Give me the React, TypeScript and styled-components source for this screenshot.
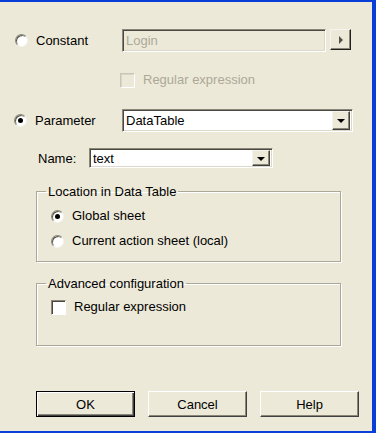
import styled, { createGlobalStyle } from "styled-components";

const Global = createGlobalStyle`
  html, body {
    margin: 0;
    padding: 0;
    background: #ece9d8;
  }
  body {
    font-family: "Liberation Sans", Arial, sans-serif;
    font-size: 13px;
    color: #000;
  }
`;

const Frame = styled.div`
  box-sizing: border-box;
  width: 376px;
  height: 433px;
  background: #ece9d8;
  border-top: 2px solid #0a3ed8;
  border-right: 4px solid #0a3ed8;
  border-bottom: 2px solid #0a3ed8;
  display: flex;
  flex-direction: column;
`;

const Row = styled.div<{ $top: number; $left?: number }>`
  display: flex;
  align-items: center;
  margin-top: ${(p) => p.$top}px;
  padding-left: ${(p) => p.$left ?? 0}px;
`;

const Option = styled.label<{ $width?: number }>`
  display: flex;
  align-items: center;
  gap: 8px;
  width: ${(p) => (p.$width ? `${p.$width}px` : "auto")};
  line-height: 16px;
  white-space: nowrap;
`;

const Radio = styled.span<{ $checked?: boolean }>`
  position: relative;
  box-sizing: border-box;
  width: 13px;
  height: 13px;
  border-radius: 50%;
  background: #fff;
  border: 1px solid;
  border-color: #8a8778 #f4f3ee #f4f3ee #8a8778;
  box-shadow: inset 1px 1px 0 #5a584e;
  flex: none;
  &::after {
    content: "";
    display: ${(p) => (p.$checked ? "block" : "none")};
    position: absolute;
    left: 3px;
    top: 3px;
    width: 5px;
    height: 5px;
    border-radius: 50%;
    background: #000;
  }
`;

const Check = styled.span<{ $disabled?: boolean }>`
  box-sizing: border-box;
  width: 15px;
  height: 15px;
  flex: none;
  background: ${(p) => (p.$disabled ? "#ece9d8" : "#fff")};
  border: 1px solid;
  border-color: ${(p) =>
    p.$disabled ? "#c9c6b8 #fff #fff #c9c6b8" : "#8a8778 #fff #fff #8a8778"};
  box-shadow: inset 1px 1px 0 ${(p) => (p.$disabled ? "#d8d5c6" : "#4a4840")};
`;

const Caption = styled.span<{ $disabled?: boolean }>`
  color: ${(p) => (p.$disabled ? "#aca899" : "#000")};
`;

const Field = styled.div<{ $width: number; $height: number; $disabled?: boolean }>`
  box-sizing: border-box;
  display: flex;
  align-items: center;
  width: ${(p) => p.$width}px;
  height: ${(p) => p.$height}px;
  background: ${(p) => (p.$disabled ? "#ece9d8" : "#fff")};
  border: 1px solid;
  border-color: #8a8778 #fff #fff #8a8778;
  box-shadow: inset 1px 1px 0 #4a4840, inset -1px -1px 0 #dcd9cb;
  padding: 2px 2px 2px 3px;
  color: ${(p) => (p.$disabled ? "#aca899" : "#000")};
  span {
    flex: 1;
  }
`;

const DropButton = styled.div<{ $w: number; $h: number }>`
  box-sizing: border-box;
  width: ${(p) => p.$w}px;
  height: ${(p) => p.$h}px;
  flex: none;
  background: #ece9d8;
  border: 1px solid;
  border-color: #f4f3ee #404040 #404040 #f4f3ee;
  box-shadow: inset -1px -1px 0 #8a8778;
  display: flex;
  align-items: center;
  justify-content: center;
  &::after {
    content: "";
    margin-top: 1px;
    border-left: 4px solid transparent;
    border-right: 4px solid transparent;
    border-top: 4px solid #000;
  }
`;

const ArrowButton = styled.div`
  box-sizing: border-box;
  width: 21px;
  height: 21px;
  margin-left: 4px;
  align-self: flex-start;
  background: #ece9d8;
  border: 1px solid;
  border-color: #f4f3ee #202020 #202020 #f4f3ee;
  box-shadow: inset -1px -1px 0 #8a8778;
  display: flex;
  align-items: center;
  justify-content: center;
  &::after {
    content: "";
    border-top: 4px solid transparent;
    border-bottom: 4px solid transparent;
    border-left: 4px solid #555349;
  }
`;

const NameLabel = styled.span`
  width: 51px;
`;

const Group = styled.fieldset<{ $top: number; $bottom: number }>`
  box-sizing: border-box;
  width: 305px;
  margin: ${(p) => p.$top}px 0 0 36px;
  padding: 0 0 ${(p) => p.$bottom}px 14px;
  border: 1px solid #aca899;
  box-shadow: inset 1px 1px 0 #fff, 1px 1px 0 #fff;
  display: flex;
  flex-direction: column;
  legend {
    margin-left: -5px;
    padding: 0 2px;
    line-height: 15px;
  }
`;

const GroupBody = styled.div<{ $top: number }>`
  display: flex;
  flex-direction: column;
  gap: 9px;
  margin-top: ${(p) => p.$top}px;
`;

const ButtonBar = styled.div`
  display: flex;
  gap: 13px;
  margin-top: auto;
  margin-bottom: 14px;
  padding-left: 36px;
`;

const Button = styled.button<{ $default?: boolean }>`
  box-sizing: border-box;
  width: 99px;
  height: 26px;
  font: inherit;
  color: #000;
  background: #ece9d8;
  border: 1px solid;
  border-color: ${(p) =>
    p.$default ? "#000" : "#fff #404040 #404040 #fff"};
  box-shadow: ${(p) =>
    p.$default
      ? "inset 1px 1px 0 #fff, inset -1px -1px 0 #404040, inset -2px -2px 0 #8a8778"
      : "inset -1px -1px 0 #8a8778"};
  padding: 0;
`;

export default function App() {
  return (
    <>
      <Global />
      <Frame>
        <Row $top={27} $left={15}>
          <Option $width={107}>
            <Radio />
            Constant
          </Option>
          <Field $width={204} $height={23} $disabled>
            <span>Login</span>
          </Field>
          <ArrowButton />
        </Row>

        <Row $top={20} $left={120}>
          <Option>
            <Check $disabled />
            <Caption $disabled>Regular expression</Caption>
          </Option>
        </Row>

        <Row $top={21} $left={14}>
          <Option $width={108}>
            <Radio $checked />
            Parameter
          </Option>
          <Field $width={231} $height={23}>
            <span>DataTable</span>
            <DropButton $w={18} $h={19} />
          </Field>
        </Row>

        <Row $top={16} $left={38}>
          <NameLabel>Name:</NameLabel>
          <Field $width={184} $height={20}>
            <span>text</span>
            <DropButton $w={18} $h={16} />
          </Field>
        </Row>

        <Group $top={16} $bottom={12}>
          <legend>Location in Data Table</legend>
          <GroupBody $top={9}>
            <Option>
              <Radio $checked />
              Global sheet
            </Option>
            <Option>
              <Radio />
              Current action sheet (local)
            </Option>
          </GroupBody>
        </Group>

        <Group $top={14} $bottom={30}>
          <legend>Advanced configuration</legend>
          <GroupBody $top={8}>
            <Option>
              <Check />
              Regular expression
            </Option>
          </GroupBody>
        </Group>

        <ButtonBar>
          <Button $default>OK</Button>
          <Button>Cancel</Button>
          <Button>Help</Button>
        </ButtonBar>
      </Frame>
    </>
  );
}
